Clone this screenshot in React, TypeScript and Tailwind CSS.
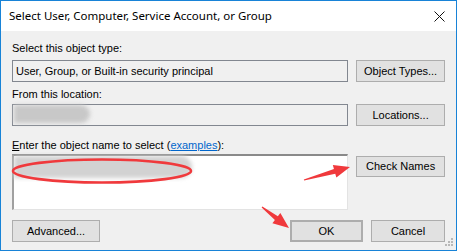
import React from 'react';

const font = { fontFamily: '"Liberation Sans", Arial, sans-serif' };

const Btn = ({ label, className = '' }: { label: string; className?: string }) => (
  <div
    className={`flex items-center justify-center bg-[#e1e1e1] border border-[#adadad] text-[11px] text-black ${className}`}
  >
    {label}
  </div>
);

const Arrow = ({ x1, y1, x2, y2 }: { x1: number; y1: number; x2: number; y2: number }) => {
  const dx = x2 - x1;
  const dy = y2 - y1;
  const len = Math.hypot(dx, dy);
  const ux = dx / len;
  const uy = dy / len;
  const px = -uy;
  const py = ux;
  const headLen = 16;
  const bx = x2 - ux * headLen;
  const by = y2 - uy * headLen;
  const pts = [
    [x1 + px * 0.6, y1 + py * 0.6],
    [bx + px * 2.4, by + py * 2.4],
    [bx + px * 6.5, by + py * 6.5],
    [x2, y2],
    [bx - px * 6.5, by - py * 6.5],
    [bx - px * 2.4, by - py * 2.4],
    [x1 - px * 0.6, y1 - py * 0.6],
  ]
    .map((p) => p.join(','))
    .join(' ');
  return <polygon points={pts} fill="#f0393c" />;
};

export default function App() {
  return (
    <div
      className="w-[457px] h-[251px] border border-[#1883d7] flex flex-col relative overflow-hidden bg-[#f0f0f0]"
      style={font}
    >
      {/* Title bar */}
      <div className="h-[30px] bg-white flex items-center justify-between pl-[8px] pr-[11px]">
        <span className="text-[11.5px] text-black" style={{ fontFamily: '"Noto Sans", sans-serif' }}>
          Select User, Computer, Service Account, or Group
        </span>
        <svg width="11" height="11" viewBox="0 0 11 11">
          <path d="M0.5 0.5 L10.5 10.5 M10.5 0.5 L0.5 10.5" stroke="#111" strokeWidth="1" />
        </svg>
      </div>

      {/* Body */}
      <div className="flex-1 flex flex-col pl-[11px] pr-[11px] text-[11px] text-black">
        <div className="mt-[10px] h-[14px] leading-[14px]">Select this object type:</div>
        <div className="mt-[5px] flex gap-[8px] h-[22px]">
          <div className="w-[337px] border border-[#828790] flex items-center px-[3px]">
            User, Group, or Built-in security principal
          </div>
          <Btn label="Object Types..." className="w-[89px]" />
        </div>

        <div className="mt-[5px] h-[14px] leading-[14px]">From this location:</div>
        <div className="mt-[3px] flex gap-[8px] h-[22px]">
          <div className="w-[337px] border border-[#828790] relative">
            <div className="absolute left-[1px] top-[0px] w-[76px] h-[18px] rounded-r-full bg-[#c8c8c8] blur-[2px]" />
          </div>
          <Btn label="Locations..." className="w-[89px]" />
        </div>

        <div className="mt-[12px] h-[14px] leading-[14px]">
          <span className="underline">E</span>nter the object name to select (
          <span className="text-[#0066cc] underline">examples</span>):
        </div>
        <div className="mt-[2px] flex gap-[8px]">
          <div className="w-[337px] h-[56px] bg-white border-t-2 border-l-2 border-t-[#8a8a8a] border-l-[#a0a0a0] border-r border-b border-r-[#e3e3e3] border-b-[#e3e3e3] relative">
            <div className="absolute left-[0px] top-[0px] w-[178px] h-[22px] rounded-r-full bg-[#d2d2d2] blur-[2px]" />
          </div>
          <Btn label="Check Names" className="w-[89px] h-[21px] mt-[2px]" />
        </div>

        <div className="mt-[10px] flex h-[22px]">
          <Btn label="Advanced..." className="w-[88px]" />
          <div className="flex-1" />
          <Btn label="OK" className="w-[73px] border-2 border-[#0078d7]" />
          <Btn label="Cancel" className="w-[74px] ml-[8px]" />
        </div>
      </div>

      {/* Resize grip */}
      <svg className="absolute right-[2px] bottom-[2px]" width="12" height="12" viewBox="0 0 12 12">
        {[
          [9, 1],
          [6, 4],
          [9, 4],
          [3, 7],
          [6, 7],
          [9, 7],
        ].map(([x, y], i) => (
          <rect key={i} x={x} y={y + 1} width="2" height="2" fill="#b8b8b8" />
        ))}
      </svg>

      {/* Annotations */}
      <svg className="absolute left-[-1px] top-[-1px] pointer-events-none" width="457" height="251">
        <ellipse cx="102" cy="171" rx="89" ry="11.5" fill="none" stroke="#f0393c" strokeWidth="2.6" />
        <Arrow x1={304} y1={180} x2={350} y2={167} />
        <Arrow x1={262} y1={207} x2={289} y2={228} />
      </svg>
    </div>
  );
}
